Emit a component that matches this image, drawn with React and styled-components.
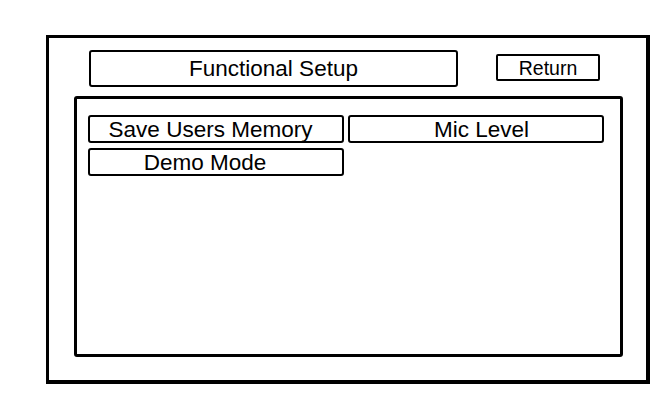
import React from "react";
import styled, { createGlobalStyle } from "styled-components";

const Global = createGlobalStyle`
  html, body { margin: 0; padding: 0; background: #fff; }
  body { font-family: "Liberation Sans", Arial, sans-serif; color: #000; }
  * { box-sizing: border-box; }
`;

const Frame = styled.div`
  margin: 35px 0 0 46px;
  width: 604px;
  height: 349px;
  border-style: solid;
  border-color: #000;
  border-width: 3px 4px 4px 3px;
  padding: 12px 0 0 25px;
  display: flex;
  flex-direction: column;
`;

const Header = styled.div`
  display: flex;
  align-items: flex-start;
  padding-left: 15px;
  gap: 38px;
`;

const Title = styled.div`
  width: 369px;
  height: 37px;
  border: 2px solid #000;
  border-radius: 3px;
  display: flex;
  align-items: center;
  justify-content: center;
  font-size: 22.5px;
  padding-top: 1px;
`;

const ReturnButton = styled.div`
  margin-top: 4px;
  width: 104px;
  height: 27px;
  border: 2px solid #000;
  border-radius: 2px;
  display: flex;
  align-items: center;
  justify-content: center;
  font-size: 19.5px;
  padding-top: 1px;
`;

const Panel = styled.div`
  margin-top: 9px;
  width: 549px;
  height: 261px;
  border: 3px solid #000;
  border-radius: 3px;
  padding: 16px 0 0 11px;
  display: grid;
  grid-template-columns: 256px 256px;
  grid-auto-rows: 28px;
  column-gap: 4px;
  row-gap: 5px;
  align-content: start;
`;

const Option = styled.div`
  border: 2px solid #000;
  border-radius: 3px;
  display: flex;
  align-items: center;
  justify-content: center;
  font-size: 22.5px;
  padding: 1px ${(p) => p.$right || 0}px 0 ${(p) => p.$left || 0}px;
  white-space: nowrap;
`;

const options = [
  { label: "Save Users Memory", right: 11 },
  { label: "Mic Level", left: 11 },
  { label: "Demo Mode", right: 22 },
];

export default function App() {
  return (
    <>
      <Global />
      <Frame>
        <Header>
          <Title>Functional Setup</Title>
          <ReturnButton>Return</ReturnButton>
        </Header>
        <Panel>
          {options.map((o) => (
            <Option key={o.label} $left={o.left} $right={o.right}>
              {o.label}
            </Option>
          ))}
        </Panel>
      </Frame>
    </>
  );
}
